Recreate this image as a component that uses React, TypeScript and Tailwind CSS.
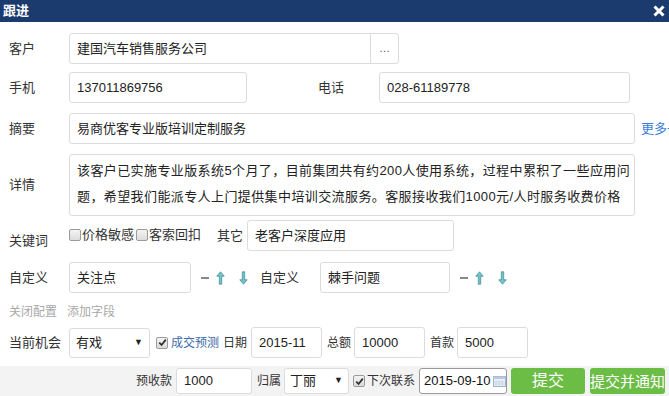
import React from 'react';

const font = { fontFamily: '"Liberation Sans", "Noto Sans CJK SC", sans-serif' };

const Arrow = ({ up }: { up?: boolean }) => (
  <svg width="9" height="14" viewBox="0 0 9 14" className={up ? '' : 'rotate-180'}>
    <path d="M4.5 0.8 L8.2 5.2 L5.7 5.2 L5.7 13.2 L3.3 13.2 L3.3 5.2 L0.8 5.2 Z" fill="#6cc6cc" stroke="#4d8f94" strokeWidth="0.8" strokeLinejoin="round" />
  </svg>
);

const Box = ({ checked }: { checked?: boolean }) => (
  <span className="inline-flex items-center justify-center w-[12px] h-[12px] rounded-[2px] border border-[#9a9a9a] bg-gradient-to-b from-[#f4f4f4] to-[#dcdcdc] shrink-0">
    {checked && (
      <svg width="9" height="9" viewBox="0 0 9 9">
        <path d="M1.2 4.6 L3.6 7 L7.8 1.6" fill="none" stroke="#333" strokeWidth="1.8" />
      </svg>
    )}
  </span>
);

const Field = ({ value, className = '' }: { value: string; className?: string }) => (
  <div className={`h-[31px] shrink-0 border border-[#dcdcdc] rounded-[3px] bg-white flex items-center px-[7px] text-[13px] text-[#222] whitespace-nowrap ${className}`}>
    {value}
  </div>
);

const Label = ({ children, className = '' }: { children: React.ReactNode; className?: string }) => (
  <div className={`w-[60px] shrink-0 text-[13px] text-[#333] ${className}`}>{children}</div>
);

const Tools = () => (
  <div className="flex items-center shrink-0">
    <span className="w-[8px] h-[2px] bg-[#888] ml-[10px]" />
    <span className="ml-[7px] flex"><Arrow up /></span>
    <span className="ml-[14px] flex"><Arrow /></span>
  </div>
);

export default function App() {
  return (
    <div className="w-[669px] h-[396px] bg-white overflow-hidden flex flex-col" style={font}>
      {/* title bar */}
      <div className="h-[22px] shrink-0 bg-[#1b3b6f] flex items-center justify-between pl-[3px] pr-[4px]">
        <span className="text-white font-bold text-[13px]">跟进</span>
        <svg width="12" height="12" viewBox="0 0 12 12">
          <path d="M1.5 1.5 L10.5 10.5 M10.5 1.5 L1.5 10.5" stroke="#fff" strokeWidth="3" />
        </svg>
      </div>

      <div className="flex flex-col pl-[9px]">
        {/* 客户 */}
        <div className="flex items-center mt-[11px]">
          <Label>客户</Label>
          <div className="flex h-[31px] border border-[#dcdcdc] rounded-[3px]">
            <div className="w-[300px] flex items-center px-[7px] text-[13px] text-[#222]">建国汽车销售服务公司</div>
            <div className="w-[28px] border-l border-[#dcdcdc] flex items-center justify-center text-[11px] text-[#555]">…</div>
          </div>
        </div>

        {/* 手机 电话 */}
        <div className="flex items-center mt-[8px]">
          <Label>手机</Label>
          <Field value="137011869756" className="w-[178px]" />
          <div className="w-[132px] pl-[71px] text-[13px] text-[#333]">电话</div>
          <Field value="028-61189778" className="w-[251px]" />
        </div>

        {/* 摘要 */}
        <div className="flex items-center mt-[10px]">
          <Label>摘要</Label>
          <Field value="易商优客专业版培训定制服务" className="w-[566px]" />
          <span className="ml-[6px] text-[13px] text-[#3a7fd5] whitespace-nowrap">更多+</span>
        </div>

        {/* 详情 */}
        <div className="flex items-center mt-[10px]">
          <Label>详情</Label>
          <div className="w-[566px] h-[62px] border border-[#dcdcdc] rounded-[3px] px-[7px] pt-[3px] text-[13px] leading-[26px] tracking-[0.4px] text-[#222] whitespace-nowrap overflow-hidden">
            <div>该客户已实施专业版系统5个月了，目前集团共有约200人使用系统，过程中累积了一些应用问</div>
            <div>题，希望我们能派专人上门提供集中培训交流服务。客服接收我们1000元/人时服务收费价格</div>
          </div>
        </div>

        {/* 关键词 */}
        <div className="flex items-center mt-[4px]">
          <Label className="pt-[10px]">关键词</Label>
          <div className="flex items-center gap-[1px] text-[13px] text-[#333] mt-[-2px]">
            <Box /><span>价格敏感</span>
          </div>
          <div className="flex items-center gap-[1px] text-[13px] text-[#333] ml-[2px] mt-[-2px]">
            <Box /><span>客索回扣</span>
          </div>
          <span className="ml-[16px] text-[13px] text-[#333]">其它</span>
          <Field value="老客户深度应用" className="w-[207px] ml-[4px]" />
        </div>

        {/* 自定义 */}
        <div className="flex items-center mt-[11px]">
          <Label>自定义</Label>
          <Field value="关注点" className="w-[122px]" />
          <Tools />
          <span className="ml-[12px] w-[60px] shrink-0 text-[13px] text-[#333]">自定义</span>
          <Field value="棘手问题" className="w-[130px]" />
          <Tools />
        </div>

        {/* links */}
        <div className="flex items-center mt-[10px] text-[12px] text-[#a8a8a8] gap-[10px]">
          <span>关闭配置</span>
          <span>添加字段</span>
        </div>

        {/* 当前机会 */}
        <div className="flex items-center mt-[6px] text-[12px] text-[#333] whitespace-nowrap">
          <Label className="text-[12px]">当前机会</Label>
          <div className="w-[81px] h-[30px] shrink-0 border border-[#dcdcdc] rounded-[3px] flex items-center justify-between px-[6px] text-[13px] text-[#222]">
            <span>有戏</span>
            <span className="text-[9px]">▼</span>
          </div>
          <span className="ml-[6px] flex"><Box checked /></span>
          <span className="ml-[3px] text-[#3d6aa8]">成交预测</span>
          <span className="ml-[4px]">日期</span>
          <Field value="2015-11" className="w-[71px] ml-[4px] h-[30px]" />
          <span className="ml-[5px]">总额</span>
          <Field value="10000" className="w-[71px] ml-[3px] h-[30px]" />
          <span className="ml-[5px]">首款</span>
          <Field value="5000" className="w-[71px] ml-[3px] h-[30px]" />
        </div>
      </div>

      {/* footer */}
      <div className="mt-[8px] flex-1 bg-[#f3f3f3] flex items-center pl-[136px] text-[12px] text-[#333] whitespace-nowrap">
        <span className="shrink-0">预收款</span>
        <div className="ml-[4px] w-[76px] h-[26px] shrink-0 border border-[#dcdcdc] rounded-[3px] bg-white flex items-center px-[7px] text-[13px] text-[#222]">1000</div>
        <span className="ml-[5px] shrink-0">归属</span>
        <div className="ml-[3px] w-[65px] h-[26px] shrink-0 border border-[#dcdcdc] rounded-[3px] bg-white flex items-center justify-between px-[5px] text-[13px] text-[#222]">
          <span>丁丽</span>
          <span className="text-[9px]">▼</span>
        </div>
        <span className="ml-[4px] flex shrink-0"><Box checked /></span>
        <span className="ml-[2px] shrink-0">下次联系</span>
        <div className="ml-[4px] w-[88px] h-[26px] shrink-0 border border-[#9a9a9a] rounded-[3px] bg-white flex items-center pl-[4px] text-[13px] text-[#111]">
          <span>2015-09-10</span>
          <svg width="13" height="11" viewBox="0 0 13 11" className="ml-[2px] shrink-0">
            <rect x="0.5" y="0.5" width="12" height="10" fill="#eef3fa" stroke="#9fb3cf" />
            <rect x="0.5" y="0.5" width="12" height="2.5" fill="#b9c9df" />
            <path d="M3 4v6M6 4v6M9 4v6M1 6h11M1 8h11" stroke="#c3cfdf" strokeWidth="0.8" />
          </svg>
        </div>
        <button className="ml-[4px] w-[74px] h-[26px] shrink-0 rounded-[3px] bg-[#6cbd45] text-white text-[16px] leading-none">提交</button>
        <button className="ml-[5px] w-[75px] h-[26px] shrink-0 rounded-[3px] bg-[#6cbd45] text-white text-[15px] leading-none whitespace-nowrap">提交并通知</button>
      </div>
    </div>
  );
}
